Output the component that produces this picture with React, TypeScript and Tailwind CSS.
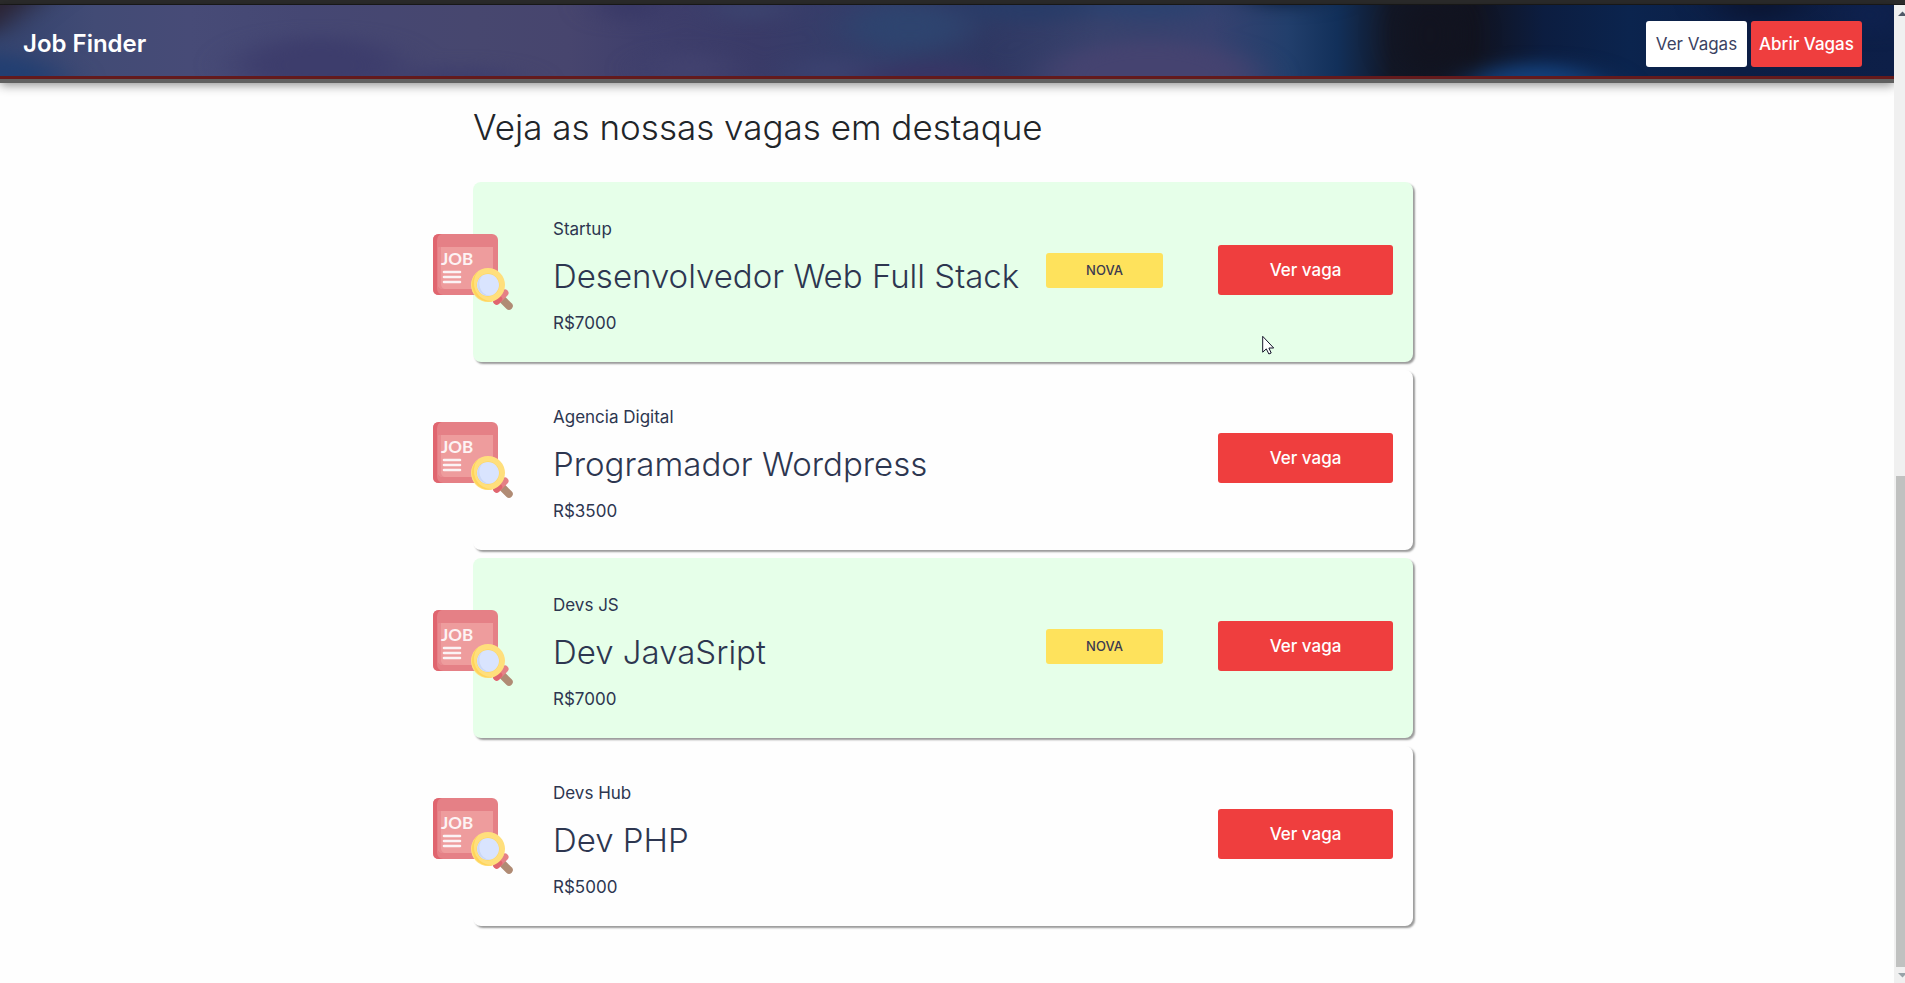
import React from "react";

type Job = {
  company: string;
  title: string;
  salary: string;
  isNew: boolean;
};

const jobs: Job[] = [
  { company: "Startup", title: "Desenvolvedor Web Full Stack", salary: "R$7000", isNew: true },
  { company: "Agencia Digital", title: "Programador Wordpress", salary: "R$3500", isNew: false },
  { company: "Devs JS", title: "Dev JavaSript", salary: "R$7000", isNew: true },
  { company: "Devs Hub", title: "Dev PHP", salary: "R$5000", isNew: false },
];

function HeaderBackdrop() {
  return (
    <svg
      aria-hidden="true"
      className="absolute inset-0 h-full w-full"
      viewBox="0 0 1894 71"
      preserveAspectRatio="none"
    >
      <defs>
        <linearGradient id="sky" x1="0" x2="1" y1="0" y2="0">
          <stop offset="0" stopColor="#34446f" />
          <stop offset="0.05" stopColor="#424b75" />
          <stop offset="0.1" stopColor="#474b77" />
          <stop offset="0.16" stopColor="#454773" />
          <stop offset="0.25" stopColor="#47476f" />
          <stop offset="0.3" stopColor="#47456e" />
          <stop offset="0.34" stopColor="#3f3f6c" />
          <stop offset="0.4" stopColor="#3a3b68" />
          <stop offset="0.47" stopColor="#323f6b" />
          <stop offset="0.52" stopColor="#2f3863" />
          <stop offset="0.58" stopColor="#38426d" />
          <stop offset="0.64" stopColor="#384270" />
          <stop offset="0.68" stopColor="#223f6c" />
          <stop offset="0.706" stopColor="#12305a" />
          <stop offset="0.735" stopColor="#121726" />
          <stop offset="0.778" stopColor="#11131f" />
          <stop offset="0.815" stopColor="#0c1d40" />
          <stop offset="0.86" stopColor="#0b244e" />
          <stop offset="0.92" stopColor="#0c1e45" />
          <stop offset="1" stopColor="#0d1f48" />
        </linearGradient>
        <filter
          id="soft"
          filterUnits="userSpaceOnUse"
          x="-200"
          y="-100"
          width="2300"
          height="270"
          colorInterpolationFilters="sRGB"
        >
          <feGaussianBlur stdDeviation="20 8" />
        </filter>
      </defs>
      <rect width="1894" height="71" fill="url(#sky)" />
      <g filter="url(#soft)">
        <path d="M-100 -40 H80 L-10 30 H-100 Z" fill="#2b2230" />
        <ellipse cx="-10" cy="74" rx="70" ry="24" fill="#223f72" />
        <ellipse cx="320" cy="60" rx="80" ry="28" fill="#3d3d6c" />
        <ellipse cx="460" cy="78" rx="60" ry="16" fill="#3e3e6d" />
        <ellipse cx="630" cy="0" rx="26" ry="16" fill="#383866" />
        <ellipse cx="750" cy="4" rx="36" ry="12" fill="#3c446f" />
        <ellipse cx="690" cy="64" rx="40" ry="16" fill="#42426f" />
        <ellipse cx="830" cy="66" rx="40" ry="12" fill="#3c4270" />
        <ellipse cx="910" cy="22" rx="60" ry="22" fill="#2e446f" />
        <ellipse cx="1030" cy="0" rx="70" ry="18" fill="#293c68" />
        <ellipse cx="930" cy="74" rx="70" ry="16" fill="#383565" />
        <ellipse cx="1150" cy="70" rx="105" ry="34" fill="#454370" />
        <ellipse cx="1150" cy="2" rx="70" ry="12" fill="#2c4270" />
        <ellipse cx="1285" cy="-10" rx="40" ry="12" fill="#0e2040" />
        <ellipse cx="1430" cy="30" rx="24" ry="40" fill="#12131f" />
        <ellipse cx="1535" cy="84" rx="70" ry="26" fill="#14407a" />
        <ellipse cx="1760" cy="-2" rx="40" ry="18" fill="#0b1634" />
        <ellipse cx="1870" cy="10" rx="20" ry="20" fill="#0f2250" />
      </g>
    </svg>
  );
}

function JobIcon() {
  return (
    <svg aria-hidden="true" className="h-20 w-20" viewBox="0 0 80 80">
      <rect x="0" y="2" width="65" height="61" rx="6" fill="#e58086" />
      <path d="M6 2 H9 Q4 3 4 9 V56 Q4 62 10 63 H6 Q0 63 0 57 V8 Q0 2 6 2 Z" fill="#e0656f" />
      <path d="M7 15 H60 V57 H9 Q5 56 5 52 V17 Q5 15 7 15 Z" fill="#ee9c9d" />
      <path d="M5 17 Q5 15 7 15 H8 V53 Q9 57 12 57 H9 Q5 56 5 52 Z" fill="#e88b90" />
      <text
        x="8"
        y="33"
        fill="#fdf3f4"
        fontFamily="Lato, sans-serif"
        fontWeight="700"
        fontSize="17"
      >
        JOB
      </text>
      <path d="M11 40 H27 M11 45 H27 M11 50 H27" stroke="#fbf3f5" strokeWidth="2.6" strokeLinecap="round" />
      <path d="M69 67 L76 74" stroke="#b08b74" strokeWidth="7.5" strokeLinecap="round" />
      <path d="M64 69 L72 61" stroke="#e58086" strokeWidth="7" strokeLinecap="round" />
      <path d="M63.5 69.5 L66 67" stroke="#e0656f" strokeWidth="6.5" strokeLinecap="round" />
      <circle cx="55" cy="53" r="17" fill="#ffdf7c" />
      <path d="M45 39.5 A17 17 0 0 0 60 69 A18 18 0 0 1 45 39.5 Z" fill="#ffd45a" />
      <circle cx="55" cy="53" r="11.4" fill="#ffd45a" />
      <circle cx="55" cy="53" r="11" fill="#d9e4fe" />
      <path d="M50 43.300 A11 11 0 0 0 57 63.800 A12 12 0 0 1 50 43.300 Z" fill="#cad7f6" />
    </svg>
  );
}

function JobCard({ job }: { job: Job }) {
  return (
    <li
      className={`flex h-[180px] items-center rounded-lg pr-5 shadow-[2px_2px_2px_#9a9a9a] ${
        job.isNew ? "bg-[#e6ffe9]" : "bg-[#fefefe]"
      }`}
    >
      <div className="-ml-10 mr-10 shrink-0">
        <JobIcon />
      </div>
      <div className="flex min-w-0 flex-1 flex-col gap-2 pt-2 text-[#2d3650]">
        <p className="text-[17px] leading-6">{job.company}</p>
        <h2 className="whitespace-nowrap text-[33px] leading-[54px] font-light">{job.title}</h2>
        <p className="text-[17px] leading-6">{job.salary}</p>
      </div>
      <div className="flex shrink-0 items-center pb-1">
        {job.isNew && (
          <span className="mr-[55px] w-[117px] rounded-[3px] bg-[#fee25c] text-center text-[13px] leading-[35px] font-medium text-[#3b3a50]">
            NOVA
          </span>
        )}
        <a
          href="#vaga"
          className="w-[175px] rounded-[3px] bg-[#ef3e3e] text-center text-[17px] leading-[50px] font-medium text-white"
        >
          Ver vaga
        </a>
      </div>
    </li>
  );
}

function ScrollRail() {
  return (
    <div aria-hidden="true" className="flex w-[11px] shrink-0 flex-col overflow-hidden bg-[#f0f0f0] pl-[2px]">
      <svg className="h-4 w-4 shrink-0" viewBox="0 0 16 16">
        <path d="M2 11 L6.500 6.500 L11 11 Z" fill="#505a68" />
      </svg>
      <div className="flex-[455]" />
      <div className="flex-[491] bg-[#c0c1c0]" />
      <svg className="h-4 w-4 shrink-0" viewBox="0 0 16 16">
        <path d="M2 6 L6.500 10.500 L11 6 Z" fill="#98a3a8" />
      </svg>
    </div>
  );
}

export default function App() {
  return (
    <div className="flex min-h-screen flex-col bg-[#fefefe] font-['Inter',sans-serif]">
      <div className="h-[5px] shrink-0 border-b border-[#1c1c1c] bg-[#2c2c2c]" />
      <div className="flex flex-1">
        <div className="min-w-0 flex-1">
          <header className="border-b-4 border-[#606060] shadow-[0_2px_10px_rgba(0,0,0,0.45)]">
            <div className="relative border-b-[3px] border-[#641a1c]">
              <HeaderBackdrop />
              <div className="relative flex h-[71px] items-center justify-between pt-[7px] pr-8 pl-[23px]">
                <a href="#inicio" className="text-2xl font-semibold text-white">
                  Job Finder
                </a>
                <nav className="flex gap-1">
                  <a
                    href="#vagas"
                    className="w-[101px] rounded-[3px] bg-white text-center text-[17px] leading-[46px] text-[#3b4262]"
                  >
                    Ver Vagas
                  </a>
                  <a
                    href="#abrir"
                    className="w-[111px] rounded-[3px] bg-[#ef3e3e] text-center text-[17px] leading-[46px] font-medium text-white"
                  >
                    Abrir Vagas
                  </a>
                </nav>
              </div>
            </div>
          </header>
          <main className="mx-auto max-w-[948px] pt-5 pr-2 pb-12">
            <h1 className="mb-[31px] text-[35px] leading-[48px] font-light text-[#212529]">
              Veja as nossas vagas em destaque
            </h1>
            <ul className="flex flex-col gap-2">
              {jobs.map((job) => (
                <JobCard key={job.title} job={job} />
              ))}
            </ul>
          </main>
        </div>
        <ScrollRail />
      </div>
      <svg
        aria-hidden="true"
        className="pointer-events-none absolute top-[335px] left-[1262px] h-5 w-[13px]"
        viewBox="0 0 13 20"
      >
        <path
          d="M0.700 1.300 V17.200 L4.300 13.900 L6.900 19 L9.200 18 L6.900 13 H11.700 Z"
          fill="#fff"
          stroke="#15152a"
          strokeWidth="1"
        />
      </svg>
    </div>
  );
}
